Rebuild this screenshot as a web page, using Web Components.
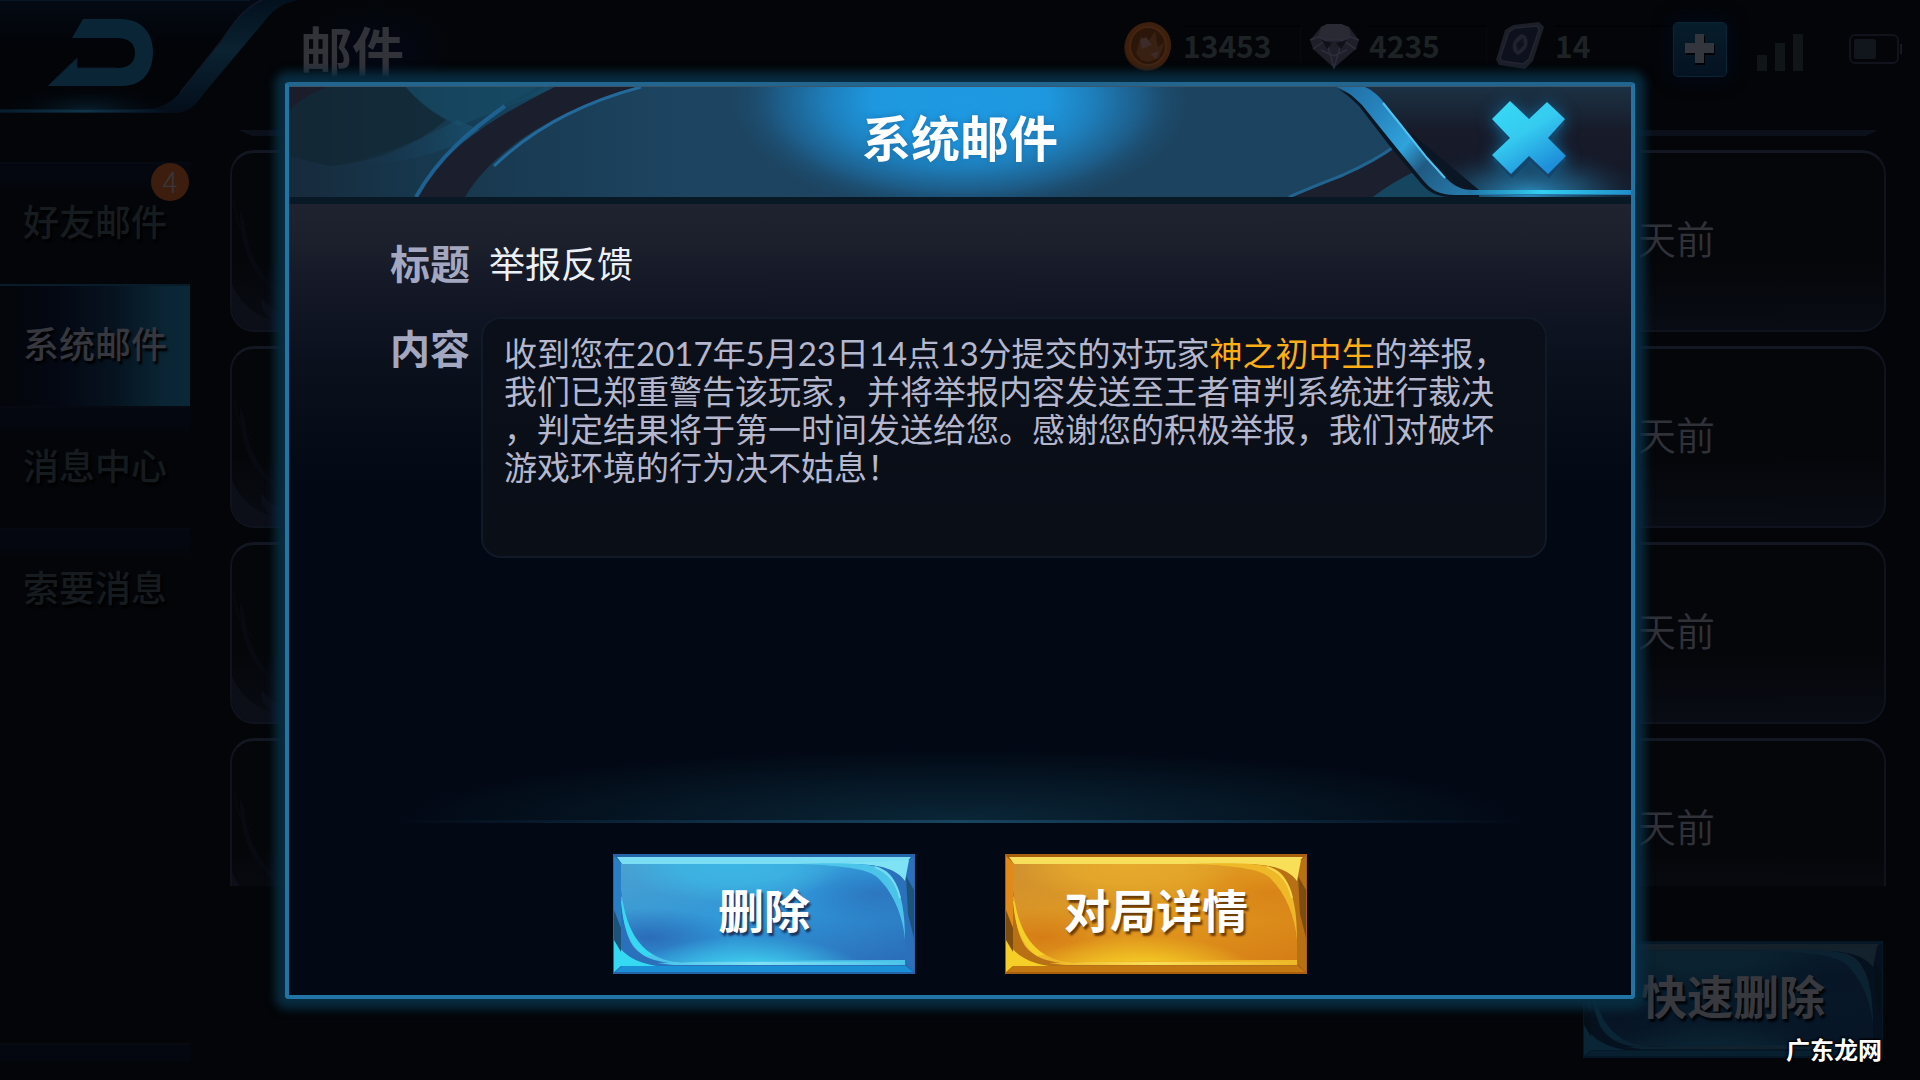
<!DOCTYPE html>
<html lang="zh-CN">
<head>
<meta charset="utf-8">
<title>系统邮件</title>
<style>
html, body { height: 100%; margin: 0; background: #030508; }
body { font-family: "Noto Sans CJK SC", sans-serif; color: #34353d; overflow: hidden; }
</style>
</head>
<body>
<mail-screen></mail-screen>
<script>
const define = (name, html, setup) => {
  const tpl = document.createElement('template');
  tpl.innerHTML = html;
  customElements.define(name, class extends HTMLElement {
    constructor() {
      super();
      this.attachShadow({ mode: 'open' }).append(tpl.content.cloneNode(true));
    }
    connectedCallback() { if (setup) setup(this, this.shadowRoot); }
  });
};

/* Back button with the curved ribbon of the top bar */
define('back-button', `
<style>
:host { display: block; width: 300px; height: 118px; }
button { display: block; width: 100%; height: 100%; padding: 0; border: 0; background: none; cursor: pointer; }
svg { display: block; }
</style>
<button type="button" aria-label="返回">
<svg width="300" height="118" viewBox="0 0 300 118">
  <defs>
    <linearGradient id="rib" x1="0" y1="0" x2="0" y2="1"><stop offset="0" stop-color="#03101d"/><stop offset=".45" stop-color="#0a2231"/><stop offset="1" stop-color="#040d1a"/></linearGradient>
    <radialGradient id="gl" cx="88" cy="112" r="92" gradientTransform="translate(0 78) scale(1 .3)" gradientUnits="userSpaceOnUse"><stop offset="0" stop-color="#08202f"/><stop offset="1" stop-color="#020409" stop-opacity="0"/></radialGradient>
    <linearGradient id="ln" x1="0" x2="1"><stop offset="0" stop-color="#071b2c"/><stop offset=".5" stop-color="#103549"/><stop offset="1" stop-color="#040d1a"/></linearGradient>
    <linearGradient id="tp" x1="0" y1="0" x2="0" y2="1"><stop offset="0" stop-color="#040a14"/><stop offset=".4" stop-color="#020408"/></linearGradient>
  </defs>
  <path d="M0 0H262C234 14 226 40 180 93C168 105 160 108 147 109H0Z" fill="url(#tp)"/>
  <rect x="0" y="74" width="180" height="35" fill="url(#gl)"/>
  <path d="M0 0H250" stroke="#071526" stroke-width="2"/>
  <path d="M0 109H147C160 108 168 105 180 93L222 40C234 22 244 8 262 0H298C280 4 272 11 263 23L205 92C195 106 188 113 174 113H0Z" fill="url(#rib)"/>
  <path d="M180 93L222 40C234 22 244 8 262 0" fill="none" stroke="#10182a" stroke-width="1.5"/>
  <path d="M0 109.500H170V112.500H0Z" fill="url(#ln)"/>
  <path d="M83 19H120C142 19 153 33 153 52C153 72 142 86 122 86H48L77 58V68H117C129 68 135 62 135 53C135 43 128 38 117 38H72Z" fill="#0a2636"/>
  <path d="M48 86L77 58V68H117" fill="none" stroke="#0c1c2c"/>
</svg></button>`);

const icons = {
  coin: `<svg width="50" height="52" viewBox="0 0 50 52"><ellipse cx="24" cy="28" rx="23" ry="23" fill="#2b1509"/><ellipse cx="25" cy="26" rx="23" ry="24" fill="#3c1f0d" transform="rotate(20 25 26)"/><ellipse cx="25" cy="26" rx="18" ry="19" fill="#2c1609" stroke="#452512" stroke-width="2"/><path d="M13 33L18 16L25 22L32 11L35 27L42 22L36 38L26 42L18 40Z" fill="#382013"/><path d="M17 20L23 17L29 25L19 29ZM27 34L36 31L33 39Z" fill="#3c2b28"/></svg>`,
  gem: `<svg width="50" height="46" viewBox="0 0 50 46"><path d="M12 4L18 1H32L40 4L50 17L47 26L25 45L4 26L1 17Z" fill="#1e1f29"/><path d="M12 4L18 1H32L40 4L42 14L33 17H17L9 14Z" fill="#292a33"/><path d="M1 17L9 14L17 17H33L42 14L50 17M4 26L17 17L25 45L33 17L47 26M12 27L25 33L38 27" fill="none" stroke="#2c2e3b" stroke-width="1.500"/><path d="M13 17L23 20L18 26ZM38 17L27 20L32 26Z" fill="#0f1119"/></svg>`,
  card: `<svg width="50" height="48" viewBox="0 0 50 48"><path d="M10 8L18 3L44 0L49 5L38 39L30 47L4 43L1 38Z" fill="#1c1e28"/><path d="M14 10L20 6L42 4L44 8L34 37L28 42L7 39L5 36Z" fill="#0d111d" stroke="#232530" stroke-width="1.500"/><path d="M27 12C36 15 34 28 23 33C14 29 17 16 27 12Z" fill="#20222d"/><path d="M28 16L29 23L23 29L21 22Z" fill="#0f131e"/></svg>`
};
define('resource-chip', `
<style>
:host { display: flex; align-items: center; gap: 10px; width: 178px; height: 50px; padding-bottom: 10px; color: #1d2225;
  font: bold 30px/36px "Noto Sans CJK SC", sans-serif; }
.icon { width: 50px; flex: none; display: grid; place-items: center; padding-top: 4px; }
.slot { flex: 1; border-top: 2px solid #010203; border-right: 1px solid #07090d; }
</style>
<div class="icon"></div><div class="slot"><slot></slot></div>`,
(el, root) => { root.querySelector('.icon').innerHTML = icons[el.getAttribute('icon')]; });

define('top-bar', `
<style>
:host { display: flex; height: 118px; align-items: flex-start; }
h1 { margin: 0 auto 0 0; padding: 0 50px 0 0; font-size: 52px; line-height: 98px; font-weight: 700; color: #323239;
  background: radial-gradient(closest-side, #040816, transparent); }
.status { display: flex; align-items: center; height: 98px; padding-right: 18px; }
.res { display: flex; gap: 8px; }
.plus { width: 54px; height: 55px; padding: 0; border: 1px solid #0a2436; border-radius: 5px; background: linear-gradient(#071d2b, #051221); box-shadow: 0 0 16px 4px #030916; }
.sig { margin: 0 46px 0 30px; }
svg { display: block; margin: auto; }
</style>
<back-button></back-button>
<h1>邮件</h1>
<div class="status">
  <div class="res">
    <resource-chip icon="coin">13453</resource-chip>
    <resource-chip icon="gem">4235</resource-chip>
    <resource-chip icon="card">14</resource-chip>
  </div>
  <button class="plus" type="button" aria-label="添加"><svg width="34" height="34" viewBox="0 0 34 34"><path d="M12 4H22V13H32V23H22V33H12V23H3V13H12Z" fill="#010205"/><path d="M12 2H21V11H31V21H21V31H12V21H2V11H12Z" fill="#34363e"/></svg></button>
  <svg class="sig" width="46" height="46" viewBox="0 0 46 46"><path d="M0 29H10V45H0ZM18 17H28V45H18ZM36 8H46V45H36Z" fill="#101518"/></svg>
  <svg width="53" height="30" viewBox="0 0 53 30"><rect x="1" y="1" width="48" height="28" rx="5" fill="none" stroke="#10131c" stroke-width="2"/><rect x="5" y="5" width="22" height="20" rx="2" fill="#10161b"/><path d="M51 10h2v10h-2z" fill="#161922"/></svg>
</div>`);

define('side-tab', `
<style>
:host { display: block; height: 122px; flex: none; }
button { position: relative; display: block; width: 100%; height: 100%; padding: 0 0 8px; border: 0; border-top: 2px solid #070912;
  background: linear-gradient(#04070f 0, #04070f 16px, #030508 28px); color: #161b1f; text-align: center;
  font: 500 36px/112px "Noto Sans CJK SC", sans-serif; text-shadow: 2px 3px 2px #000; cursor: pointer; }
:host([active]) button { color: #36373f; border-color: #081c29;
  background: linear-gradient(90deg, #03050a, #040813 30%, #06131f 60%, #0a2433 85%, #0a2838); }
.badge { position: absolute; right: 1px; top: -1px; width: 38px; height: 38px; border-radius: 50%; background: #3d1e0e; color: #37383c;
  font: 300 28px/36px "Noto Sans CJK SC", sans-serif; text-shadow: none; }
.badge[hidden] { display: none; }
</style>
<button type="button"><slot></slot><span class="badge" hidden></span></button>`,
(el, root) => {
  const n = el.getAttribute('count'), b = root.querySelector('.badge');
  if (n) { b.textContent = n; b.hidden = false; }
});

define('side-nav', `
<style>
:host { display: flex; flex-direction: column; }
nav { flex: 1; display: flex; flex-direction: column; padding-top: 44px; }
.end { margin-top: auto; height: 37px; box-sizing: border-box; border-top: 2px solid #070a0f; background: linear-gradient(#04070f 0, #04070f 14px, #030508 18px); }
</style>
<nav>
  <side-tab count="4">好友邮件</side-tab>
  <side-tab active>系统邮件</side-tab>
  <side-tab>消息中心</side-tab>
  <side-tab>索要消息</side-tab>
  <div class="end"></div>
</nav>`);

define('mail-card', `
<style>
:host { position: relative; display: flex; align-items: center; justify-content: flex-end; flex: none; box-sizing: border-box; height: 182px;
  padding: 0 169px 10px 0; border: 2px solid #0e131d; border-top: 3px solid #121722; border-radius: 24px; overflow: hidden;
  background: linear-gradient(#040609 60%, #0a0c15); font-size: 39px; line-height: 56px; font-weight: 350; color: #303139; }
svg { position: absolute; left: 0; bottom: 0; }
</style>
<svg width="80" height="130" viewBox="0 0 80 130" aria-hidden="true"><path d="M2 0Q4 30 20 44" fill="none" stroke="#07090f" stroke-width="2"/><path d="M8 10Q6 74 60 106L56 96Q18 74 12 20Z" fill="#080a11"/><path d="M0 84Q12 112 40 120Q26 110 30 98Q44 118 80 122V130H0Z" fill="#0c0e18"/></svg>
<slot></slot>`);

define('mail-list', `
<style>
:host { display: flex; flex-direction: column; gap: 14px; min-height: 0; overflow: hidden; }
.prev { flex: none; height: 6px; margin: 0 8px; background: #0c101a; clip-path: polygon(0 0, 100% 0, calc(100% - 12px) 100%, 14px 100%); }
</style>
<div class="prev"></div>
<mail-card>天前</mail-card>
<mail-card>天前</mail-card>
<mail-card>天前</mail-card>
<mail-card>天前</mail-card>`);

/* Bevelled button: tones blue, gold, dim */
const tones = {
  blue: { edge:'#2664aa', side:'#2a7fc4', top:'#79def4', bot:'#1b8fd6', a:'#4aa0d0', b:'#2f97d8', c:'#2b6cb8', hi:'#3cb6e4', low:'#3cc4ea', sw:'#4cc4ea', br:'#36d9f2', dk:'#2b70ba', line:'#7fe2f5', dark:'#1c5378', text:'#ffffff', sh:'#1a3560' },
  gold: { edge:'#a8600f', side:'#e08a1a', top:'#f7df5c', bot:'#c37812', a:'#cf9030', b:'#e29a1e', c:'#d57d16', hi:'#e6aa2c', low:'#f2c424', sw:'#eeb828', br:'#f5cf28', dk:'#b87014', line:'#f9de58', dark:'#7d4d10', text:'#ffffff', sh:'#6a3b08' },
  dim: { edge:'#061726', side:'#081d2c', top:'#14212b', bot:'#071f2e', a:'#081d2b', b:'#081a2a', c:'#071425', hi:'#0b2330', low:'#0a2332', sw:'#0a2232', br:'#0a2636', dk:'#06111f', line:'#13222c', dark:'#050f18', text:'#38393f', sh:'#010408' }
};
define('game-button', `
<style>
:host { display: block; width: 302px; height: 120px; }
button { position: relative; display: block; width: 100%; height: 100%; padding: 0 0 12px; border: 0; background: none; cursor: pointer;
  font: bold 46px/106px "Noto Sans CJK SC", sans-serif; }
svg { position: absolute; inset: 0; width: 100%; height: 100%; }
span { position: relative; }
</style>
<button type="button"><svg viewBox="0 0 302 120" preserveAspectRatio="none" aria-hidden="true"></svg><span><slot></slot></span></button>`,
(el, root) => {
  const t = tones[el.getAttribute('tone')];
  const b = root.querySelector('button');
  b.style.color = t.text;
  b.style.textShadow = '2px 3px 2px ' + t.sh;
  const panel = 'M8 10H184C240 12 254 16 264 23C280 38 290 62 292 86V108H64C24 104 12 70 8 36Z';
  root.querySelector('svg').innerHTML = `
<defs>
<linearGradient id="m" x1="0" y1="0" x2="1" y2="1"><stop offset="0" stop-color="${t.a}"/><stop offset=".5" stop-color="${t.b}"/><stop offset="1" stop-color="${t.c}"/></linearGradient>
<radialGradient id="h" cx=".4" cy="0" r=".4"><stop offset="0" stop-color="${t.hi}"/><stop offset=".5" stop-color="${t.hi}" stop-opacity=".8"/><stop offset="1" stop-color="${t.hi}" stop-opacity="0"/></radialGradient>
<radialGradient id="l" cx=".45" cy="1.150" r=".42"><stop offset="0" stop-color="${t.low}"/><stop offset=".4" stop-color="${t.low}"/><stop offset="1" stop-color="${t.low}" stop-opacity="0"/></radialGradient>
<radialGradient id="d" cx=".1" cy=".75" r=".3"><stop offset="0" stop-color="${t.c}"/><stop offset="1" stop-color="${t.c}" stop-opacity="0"/></radialGradient>
<radialGradient id="e" cx=".9" cy=".3" r=".3"><stop offset="0" stop-color="${t.c}" stop-opacity=".7"/><stop offset="1" stop-color="${t.c}" stop-opacity="0"/></radialGradient>
<linearGradient id="ln" x1="0" x2="1"><stop offset="0" stop-color="${t.line}" stop-opacity="0"/><stop offset=".4" stop-color="${t.line}"/><stop offset="1" stop-color="${t.line}" stop-opacity="0"/></linearGradient>
</defs>
<rect width="302" height="120" fill="${t.edge}"/>
<path d="M1 2L8 9V110L1 118Z" fill="${t.side}"/>
<path d="M301 2L293 9V110L301 118Z" fill="${t.dk}"/>
<path d="M293 22L301 36V84L295 60Z" fill="${t.dark}"/>
<path d="M2 118L9 112H293L300 118Z" fill="${t.bot}"/>
<rect x="8" y="9" width="285" height="103" fill="${t.dk}"/>
<path d="M4 3H298L292 10H9Z" fill="${t.top}"/>
<path d="M236 9L296 6L292 27C284 16 270 10 236 10Z" fill="${t.line}"/>
<path d="M180 10C252 8 270 10 279 23C289 38 292 60 292 86L262 60L240 20Z" fill="${t.sw}"/>
<path d="M262 13C276 18 284 30 287 44" fill="none" stroke="${t.line}" stroke-width="2" opacity=".8"/>
<path d="M8 42C9 60 12 80 20 92C30 104 42 108 66 110V100L20 60Z" fill="${t.sw}"/>
<path d="M8 46C10 70 15 90 32 102L44 100L21 66Z" fill="${t.br}"/>
<path d="M1 86C10 100 20 108 44 112H8L1 118Z" fill="${t.br}"/>
<path d="M1 56L8 74V98L1 86Z" fill="${t.dark}"/>
<path d="${panel}" fill="url(#m)"/>
<path d="${panel}" fill="url(#d)"/>
<path d="${panel}" fill="url(#e)"/>
<path d="${panel}" fill="url(#h)"/>
<path d="${panel}" fill="url(#l)"/>
<path d="M44 109Q150 106 292 106V111H60Z" fill="${t.sw}"/>
<rect x="50" y="108" width="240" height="3" fill="url(#ln)"/>
<rect x=".5" y=".5" width="301" height="119" fill="none" stroke="${t.edge}"/>`;
});

define('dialog-header', `
<style>
:host { position: relative; display: grid; grid-template-columns: 152px 1fr 152px; height: 111px; border-bottom: 7px solid #081824; }
.art { position: absolute; inset: 0; width: 100%; height: 100%; }
h2 { position: relative; grid-column: 2; margin: 0; text-align: center; font-size: 49px; line-height: 100px; font-weight: bold; color: #fff; text-shadow: 0 0 6px #1c6fae; }
button { position: relative; width: 100px; height: 106px; padding: 0; border: 0; background: none; cursor: pointer; }
button svg { display: block; margin: auto; filter: drop-shadow(0 0 8px #12618f); }
</style>
<svg class="art" viewBox="0 0 1342 111" preserveAspectRatio="none" aria-hidden="true">
  <defs>
    <linearGradient id="bg" x1="0" x2="1"><stop offset="0" stop-color="#16303f"/><stop offset=".12" stop-color="#18374d"/><stop offset=".3" stop-color="#1d4562"/><stop offset="1" stop-color="#1b4360"/></linearGradient>
    <radialGradient id="glow" gradientUnits="userSpaceOnUse" cx="671" cy="0" r="234" gradientTransform="translate(0 14) scale(1 .5)"><stop offset="0" stop-color="#1e9ae2"/><stop offset=".38" stop-color="#1e97de"/><stop offset=".56" stop-color="#1e80bd"/><stop offset=".78" stop-color="#1d5c88"/><stop offset="1" stop-color="#1d4562" stop-opacity="0"/></radialGradient>
    <linearGradient id="l1" x1="0" x2="1"><stop offset="0" stop-color="#172a3b"/><stop offset="1" stop-color="#164560"/></linearGradient>
    <linearGradient id="l2" x1="0" x2="1"><stop offset="0" stop-color="#15283a" stop-opacity="0"/><stop offset="1" stop-color="#1a5b7e"/></linearGradient>
    <linearGradient id="rb" gradientUnits="userSpaceOnUse" x1="1050" y1="0" x2="1170" y2="108"><stop offset="0" stop-color="#1f6da3"/><stop offset=".25" stop-color="#2781ba"/><stop offset=".55" stop-color="#2fa3dc"/><stop offset=".72" stop-color="#215a82"/><stop offset="1" stop-color="#2578a8"/></linearGradient>
    <linearGradient id="cn" x1="0" y1="0" x2="0" y2="1"><stop offset="0" stop-color="#1b3244"/><stop offset=".4" stop-color="#171b2a"/><stop offset="1" stop-color="#131726"/></linearGradient>
    <radialGradient id="cg" gradientUnits="userSpaceOnUse" cx="1240" cy="108" r="125" gradientTransform="translate(0 65) scale(1 .4)"><stop offset="0" stop-color="#2c8dc2"/><stop offset=".5" stop-color="#1d4b69" stop-opacity=".8"/><stop offset="1" stop-color="#171b2a" stop-opacity="0"/></radialGradient>
    <linearGradient id="bl" x1="0" x2="1"><stop offset="0" stop-color="#1e74a8"/><stop offset=".45" stop-color="#33d2f4"/><stop offset="1" stop-color="#1f8cc8"/></linearGradient>
  </defs>
  <rect width="1342" height="111" fill="url(#bg)"/>
  <path d="M0 0H266C200 36 155 70 127 111H0Z" fill="url(#l1)"/>
  <path d="M0 0H116Q134 22 157 34Q110 74 40 80L0 70Z" fill="#132632" opacity=".7"/>
  <path d="M116 0Q134 22 170 40L260 4V0Z" fill="#15506b" opacity=".5"/>
  <path d="M36 80Q110 68 168 34L196 46Q120 84 36 80Z" fill="url(#l2)" opacity=".6"/>
  <path d="M0 0H40Q18 8 0 24Z" fill="#1b1d2b"/>
  <path d="M268 0H352C270 22 205 62 176 111H129C150 70 190 38 268 0Z" fill="#1b1f2d"/>
  <path d="M127 111C150 70 182 44 216 20" fill="none" stroke="#1e608f" stroke-width="4"/>
  <path d="M216 20L262 -4" fill="none" stroke="#164560" stroke-width="3"/>
  <path d="M352 1C280 20 234 52 205 80" fill="none" stroke="#236a9b" stroke-width="3"/>
  <rect x="400" width="542" height="111" fill="url(#glow)"/>
  <path d="M1001 111C1020 102 1036 96 1054 89C1074 80 1090 72 1104 61L1125 86Q1104 96 1084 111Z" fill="#1c202e"/>
  <path d="M1000 111C1020 102 1036 96 1054 89C1074 80 1090 72 1106 60" fill="none" stroke="#226490" stroke-width="3"/>
  <path d="M1084 111Q1104 96 1125 86L1150 111Z" fill="#164560"/>
  <path d="M1073 0H1342V111H1190C1160 108 1150 96 1138 71L1095 16Q1085 4 1073 0Z" fill="url(#cn)"/>
  <path d="M1140 60H1342V111H1170Z" fill="url(#cg)"/>
  <path d="M1042 0C1052 3 1062 12 1070 20L1103 63L1130 95C1138 105 1146 110 1160 111H1190V104L1090 20Z" fill="#0b1624"/>
  <path d="M1044 0H1073C1082 3 1086 7 1092 13L1111 37L1138 71L1158 93C1166 101 1174 104 1184 104H1342V109H1166C1150 109 1142 104 1133 93L1106 60L1073 19C1064 10 1056 3 1044 0Z" fill="url(#rb)"/>
  <path d="M1094 17L1111 38L1138 72L1156 92" fill="none" stroke="#4fc3ee" stroke-width="2"/>
  <rect x="1180" y="104" width="162" height="4" fill="url(#bl)"/>
  <rect width="1342" height="1" fill="#3b566a"/>
</svg>
<h2><slot></slot></h2>
<button type="button" aria-label="关闭"><svg width="76" height="104" viewBox="0 0 76 104">
  <defs><linearGradient id="x" x1="0" y1="0" x2=".6" y2="1"><stop offset="0" stop-color="#35dbf5"/><stop offset=".5" stop-color="#35cbf0"/><stop offset="1" stop-color="#1e8fda"/></linearGradient></defs>
  <path d="M19 18L38 36L56 19L74 37L58 55L75 73L58 91L39 74L21 91L2 73L19 55L2 37Z" fill="#14466b"/>
  <path d="M19 14L38 32L56 15L74 32L57 51L75 69L57 87L38 69L20 87L1 68L19 51L1 32Z" fill="url(#x)"/></svg></button>`);

define('mail-field', `
<style>
:host { display: grid; grid-template-columns: 91px 1fr; align-items: start; }
.label { font-size: 40px; line-height: 44px; font-weight: 700; color: #a3a7c0; }
:host([boxed]) .label { padding-top: 8px; }
.value { padding: 0 0 2px 8px; font-size: 36px; line-height: 44px; font-weight: 400; color: #eef0f8; }
:host([boxed]) .value { box-sizing: border-box; min-height: 241px; padding: 15px 21px; border: 2px solid #101a28; border-radius: 20px; background: linear-gradient(#0a0f19, #0a0e17);
  font: 400 33px/38px Lato, "Noto Sans CJK SC", sans-serif; color: #b4b7cd; line-break: anywhere; }
::slotted(em) { font-style: normal; color: #fdae14; }
</style>
<div class="label"><slot name="label"></slot></div>
<div class="value"><slot></slot></div>`);

define('mail-dialog', `
<style>
:host { display: flex; flex-direction: column; box-sizing: border-box; border: 4px solid #2075a5; border-top-color: #22658f; border-radius: 4px;
  background: #020814; box-shadow: 0 0 10px 10px #082c40; }
.body { flex: 1; display: flex; flex-direction: column; gap: 31px; padding: 36px 84px 0 101px; background: linear-gradient(#1f2330 0, #1c202c 40px, #141827 80px, #0b101d 160px, #020814 280px); }
.glow { height: 72px; background: radial-gradient(50% 100% at 50% 100%, #0a2637, transparent); margin: 0 100px; }
.rule { height: 3px; margin: 0 100px; background: linear-gradient(90deg, transparent, #103048 30%, #184560 50%, #103048 70%, transparent); }
footer { display: flex; justify-content: center; gap: 90px; padding: 31px 0 21px; }
</style>
<dialog-header>系统邮件</dialog-header>
<div class="body">
  <mail-field><span slot="label">标题</span>举报反馈</mail-field>
  <mail-field boxed><span slot="label">内容</span>收到您在2017年5月23日14点13分提交的对玩家<em>神之初中生</em>的举报，<br>我们已郑重警告该玩家，并将举报内容发送至王者审判系统进行裁决，判定结果将于第一时间发送给您。感谢您的积极举报，我们对破坏游戏环境的行为决不姑息！</mail-field>
</div>
<div class="glow"></div>
<div class="rule"></div>
<footer>
  <game-button tone="blue">删除</game-button>
  <game-button tone="gold">对局详情</game-button>
</footer>`,
(el) => { el.setAttribute('role', 'dialog'); });

define('mail-screen', `
<style>
:host { position: relative; display: grid; grid-template-rows: auto 1fr; height: 100vh; overflow: hidden; background: #030508; }
main { display: grid; grid-template-columns: 190px 1fr; min-height: 0; }
section { display: flex; flex-direction: column; min-height: 0; padding: 12px 34px 22px 40px; }
mail-list { flex: 1; }
.actions { display: flex; justify-content: flex-end; padding: 55px 3px 0; }
.actions game-button { width: 300px; height: 117px; }
.overlay { position: absolute; inset: 0; display: grid; padding: 82px 285px 81px; }
.mark { position: absolute; right: 38px; bottom: 15px; margin: 0; font: bold 24px/32px "Noto Sans CJK SC", sans-serif; color: #fff;
  text-shadow: 0 0 3px #000, 1px 1px 2px #000, -1px -1px 2px #000; }
</style>
<top-bar></top-bar>
<main>
  <side-nav></side-nav>
  <section>
    <mail-list></mail-list>
    <div class="actions"><game-button tone="dim">快速删除</game-button></div>
  </section>
</main>
<div class="overlay"><mail-dialog></mail-dialog></div>
<p class="mark">广东龙网</p>`);
</script>
</body>
</html>
